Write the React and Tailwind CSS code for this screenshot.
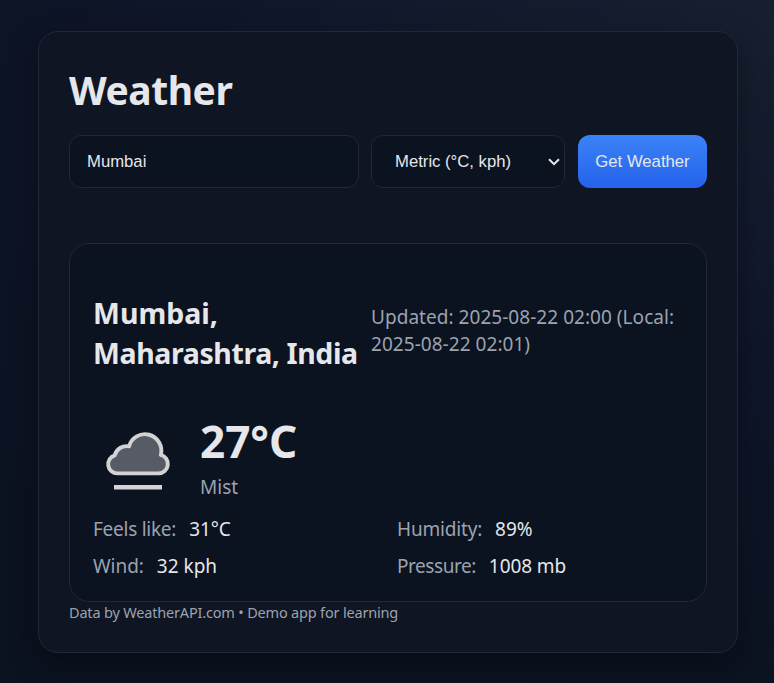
import React from "react";

const stats = [
  { label: "Feels like:", value: "31°C", labelTracking: "tracking-[-0.26px]", valueTracking: "tracking-[-0.1px]" },
  { label: "Humidity:", value: "89%", labelTracking: "tracking-[-0.18px]", valueTracking: "tracking-[-0.1px]" },
  { label: "Wind:", value: "32 kph", labelTracking: "tracking-[-0.05px]", valueTracking: "tracking-[0px]" },
  { label: "Pressure:", value: "1008 mb", labelTracking: "tracking-[-0.45px]", valueTracking: "tracking-[-0.1px]" },
];

function MistIcon() {
  return (
    <svg width="90" height="80" viewBox="0 0 90 80" fill="none" className="block shrink-0">
      <path
        d="M24.5 51.4H65.5A9.4 9.4 0 0 0 67.8 32.9A16.2 16.2 0 0 0 36 24.4A12.2 12.2 0 0 0 21.7 33.4A9.2 9.2 0 0 0 24.5 51.4Z"
        fill="#575b66"
        stroke="#d3d3d3"
        strokeWidth="3.9"
        strokeLinejoin="round"
      />
      <path d="M21 65.2H69" stroke="#d3d3d3" strokeWidth="4.4" />
    </svg>
  );
}

export default function App() {
  return (
    <div className="h-[683px] w-[774px] overflow-hidden bg-[radial-gradient(1100px_700px_at_100%_0%,#162030_0%,#0f162a_50%,#0b1220_100%)] pl-[38px] pt-[31px] font-['Noto_Sans','Open_Sans',sans-serif] text-[#e5e7eb]">
      <main className="flex h-[622px] w-[700px] flex-col rounded-[20px] border border-[#1f2937] bg-[#0f1522] px-[30px] shadow-[0_10px_30px_rgba(0,0,0,0.35)]">
        <h1 className="mt-[31px] h-[54px] text-[39px] font-bold leading-[54px] tracking-[-0.45px]">
          <span>Weather</span>
        </h1>

        <form className="mt-[18px] flex h-[53px] shrink-0 font-['Liberation_Sans',Arial,sans-serif] text-[16.7px]" onSubmit={(e) => e.preventDefault()}>
          <input
            defaultValue="Mumbai"
            className="h-full w-[290px] rounded-xl border border-[#1f2937] bg-[#0b1220] px-[17px] outline-none"
          />
          <button type="button" className="ml-3 flex h-full w-[194px] items-center justify-between rounded-xl border border-[#1f2937] bg-[#0b1220] pl-[23px] pr-[4px]">
            <span>Metric (°C, kph)</span>
            <svg width="12" height="8" viewBox="0 0 12 8" fill="none">
              <path d="M1 1.2L6 6.2L11 1.2" stroke="#e5e7eb" strokeWidth="2" />
            </svg>
          </button>
          <button type="submit" className="ml-[13px] h-full w-[129px] whitespace-nowrap rounded-xl bg-linear-to-b from-[#3b82f6] to-[#2563eb]">
            Get Weather
          </button>
        </form>

        <section className="mt-[55px] h-[359px] shrink-0 rounded-[20px] border border-[#1f2937] bg-[#0b1220] px-[23px]">
          <div className="flex pt-[49px]">
            <h2 className="w-[278px] shrink-0 whitespace-nowrap text-[28.5px] font-bold leading-10">
              <span>Mumbai,</span>
              <br />
              <span className="tracking-[-0.4px]">Maharashtra, India</span>
            </h2>
            <p className="mt-[11px] whitespace-nowrap text-[19px] leading-[27px] tracking-[0.04px] text-[#9ca3af]">
              <span>Updated: 2025-08-22 02:00 (Local:</span>
              <br />
              <span>2025-08-22 02:01)</span>
            </p>
          </div>

          <div className="mt-[49px] flex">
            <MistIcon />
            <div className="ml-[17px]">
              <p className="-mt-0.5 h-[42px] text-[44px] font-bold leading-[42px]"><span>27°C</span></p>
              <p className="mt-[12px] text-[19px] leading-[27px] text-[#9ca3af]"><span>Mist</span></p>
            </div>
          </div>

          <dl className="mt-[14px] grid grid-cols-[304px_1fr] gap-y-[10px] text-[19px] leading-[27px]">
            {stats.map((s) => (
              <div key={s.label} className="flex gap-[13px]">
                <dt className={`text-[#9ca3af] ${s.labelTracking}`}>{s.label}</dt>
                <dd className={s.valueTracking}>{s.value}</dd>
              </div>
            ))}
          </dl>
        </section>

        <footer className="-mt-px text-[14.5px] leading-[22px] tracking-[-0.18px] text-[#9ca3af]">
          <span>Data by WeatherAPI.com • Demo app for learning</span>
        </footer>
      </main>
    </div>
  );
}
